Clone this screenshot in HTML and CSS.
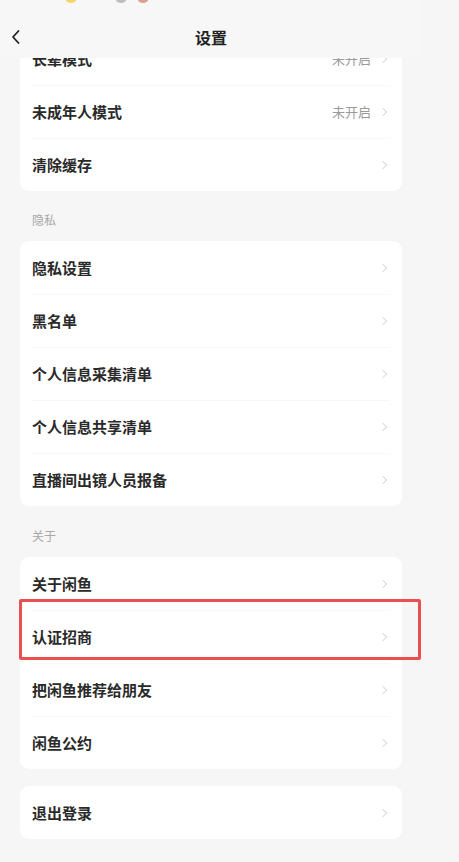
FILE: index.html
```html
<!DOCTYPE html>
<html lang="zh-CN">
<head>
<meta charset="utf-8">
<title>设置</title>
<link rel="stylesheet" href="styles.css">
</head>
<body>
<div class="screen">
  <div class="status">
    <span class="dot dot-yellow"></span>
    <span class="dot dot-grey"></span>
    <span class="dot dot-red"></span>
  </div>
  <header class="navbar">
    <svg class="back" width="12" height="16" viewBox="0 0 12 16"><path d="M8.5 2 L3 8 L8.5 14" fill="none" stroke="#222" stroke-width="1.8" stroke-linecap="round" stroke-linejoin="round"/></svg>
    <h1 class="title">设置</h1>
  </header>
  <main class="content">
    <section class="card card-first">
      <div class="row"><span class="label">长辈模式</span><span class="value">未开启</span><i class="chev"></i></div>
      <div class="row"><span class="label">未成年人模式</span><span class="value">未开启</span><i class="chev"></i></div>
      <div class="row"><span class="label">清除缓存</span><i class="chev"></i></div>
    </section>
    <div class="section-title">隐私</div>
    <section class="card">
      <div class="row"><span class="label">隐私设置</span><i class="chev"></i></div>
      <div class="row"><span class="label">黑名单</span><i class="chev"></i></div>
      <div class="row"><span class="label">个人信息采集清单</span><i class="chev"></i></div>
      <div class="row"><span class="label">个人信息共享清单</span><i class="chev"></i></div>
      <div class="row"><span class="label">直播间出镜人员报备</span><i class="chev"></i></div>
    </section>
    <div class="section-title section-title-about">关于</div>
    <section class="card">
      <div class="row"><span class="label">关于闲鱼</span><i class="chev"></i></div>
      <div class="row row-marked"><span class="label">认证招商</span><i class="chev"></i><span class="highlight"></span></div>
      <div class="row"><span class="label">把闲鱼推荐给朋友</span><i class="chev"></i></div>
      <div class="row"><span class="label">闲鱼公约</span><i class="chev"></i></div>
    </section>
    <section class="card card-logout">
      <div class="row"><span class="label">退出登录</span><i class="chev"></i></div>
    </section>
  </main>
</div>
</body>
</html>
```

FILE: styles.css
```css
html, body {
  margin: 0;
  padding: 0;
  background: #f6f6f6;
}
body {
  width: 459px;
  height: 862px;
  overflow: hidden;
  font-family: "Noto Sans CJK SC", "Noto Sans", sans-serif;
  color: #222;
}
.screen {
  width: 422px;
  height: 862px;
  display: flex;
  flex-direction: column;
  overflow: hidden;
}
.status {
  height: 4px;
  display: flex;
  align-items: flex-start;
  padding-left: 66px;
  gap: 30px;
  background: #f7f7f7;
  overflow: hidden;
}
.dot {
  width: 10px;
  height: 6px;
  border-radius: 50%;
  margin-top: -3px;
}
.dot-yellow { background: #f5d66a; }
.dot-grey { background: #bdbdbd; margin-left: 10px; }
.dot-red { background: #d9a090; margin-left: -18px; }
.navbar {
  height: 54px;
  box-sizing: border-box;
  padding-top: 23px;
  background: #f7f7f7;
  display: flex;
  align-items: flex-start;
  justify-content: center;
  position: relative;
  z-index: 2;
}
.back {
  position: absolute;
  left: 10px;
  top: 25px;
}
.title {
  margin: 0;
  font-size: 16px;
  font-weight: 700;
  line-height: 20px;
  color: #222;
}
.content {
  flex: 1;
  overflow: hidden;
  padding: 0 20px;
  display: flex;
  flex-direction: column;
}
.card {
  background: #fff;
  border-radius: 9px;
  display: flex;
  flex-direction: column;
  flex-shrink: 0;
}
.card-first {
  margin-top: -26px;
}
.card-logout {
  margin-top: 17px;
}
.row {
  height: 53px;
  display: flex;
  align-items: center;
  padding: 0 13px 0 12px;
  position: relative;
  flex-shrink: 0;
}
.row + .row::before {
  content: "";
  position: absolute;
  left: 12px;
  right: 12px;
  top: 0;
  height: 1px;
  background: #f8f8f8;
}
.label {
  flex: 1;
  font-size: 15px;
  font-weight: 700;
  color: #2a2a2a;
  line-height: 20px;
}
.value {
  font-size: 13px;
  color: #9a9a9a;
  margin-right: 9px;
  line-height: 18px;
}
.chev {
  width: 5px;
  height: 5px;
  border-top: 1.2px solid #dadada;
  border-right: 1.2px solid #dadada;
  transform: rotate(45deg);
  margin-right: 3px;
}
.section-title {
  flex-shrink: 0;
  padding: 21px 0 13px 12px;
  font-size: 12px;
  line-height: 16px;
  color: #a8a8a8;
}
.section-title-about {
  padding-top: 22px;
}
.highlight {
  position: absolute;
  left: -1px;
  right: -19px;
  top: -11px;
  bottom: 3px;
  border: 3px solid #ec4f4f;
  border-radius: 2px;
  pointer-events: none;
}
```
